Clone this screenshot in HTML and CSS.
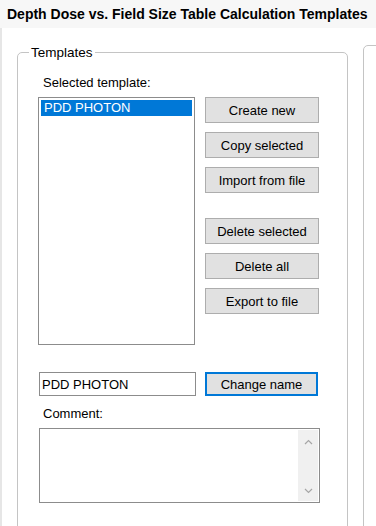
FILE: index.html
```html
<!DOCTYPE html>
<html lang="en">
<head>
  <meta charset="UTF-8" />
  <meta name="viewport" content="width=device-width, initial-scale=1.0" />
  <title>Depth Dose vs. Field Size Table Calculation Templates</title>
  <link rel="stylesheet" href="styles.css">
</head>
<body>
  <div class="title-bar">Depth Dose vs. Field Size Table Calculation Templates</div>
  <div class="main">
    <fieldset class="group templates">
      <legend>Templates</legend>
      <div class="group-body">
        <div class="label">Selected template:</div>
        <div class="pick-row">
          <div class="listbox">
            <div class="item selected">PDD PHOTON</div>
          </div>
          <div class="actions">
            <div class="btn-set">
              <button class="btn">Create new</button>
              <button class="btn">Copy selected</button>
              <button class="btn">Import from file</button>
            </div>
            <div class="btn-set">
              <button class="btn">Delete selected</button>
              <button class="btn">Delete all</button>
              <button class="btn">Export to file</button>
            </div>
          </div>
        </div>
        <div class="name-row">
          <input class="name-input" type="text" value="PDD PHOTON" />
          <button class="btn focused">Change name</button>
        </div>
        <div class="label comment-label">Comment:</div>
        <div class="comment">
          <div class="comment-text"></div>
          <div class="scroll">
            <svg width="9" height="6" viewBox="0 0 9 6"><path d="M1 5 L4.5 1.5 L8 5" fill="none" stroke="#a6a6a6" stroke-width="1.2"/></svg>
            <svg width="9" height="6" viewBox="0 0 9 6"><path d="M1 1 L4.5 4.5 L8 1" fill="none" stroke="#a6a6a6" stroke-width="1.2"/></svg>
          </div>
        </div>
      </div>
    </fieldset>
    <fieldset class="group other"></fieldset>
  </div>
</body>
</html>
```

FILE: styles.css
```css
body {
  margin: 0;
  font-family: "Liberation Sans", Arial, sans-serif;
  font-size: 13px;
  color: #000;
  background-color: #fff;
  overflow: hidden;
}

.title-bar {
  height: 28px;
  line-height: 28px;
  padding-left: 7px;
  background-color: #f7f7f7;
  font-size: 14px;
  font-weight: bold;
  white-space: nowrap;
  overflow: hidden;
}

.main {
  display: flex;
  gap: 15px;
  padding-left: 15px;
  border-left: 2px solid #e6e6e6;
  height: 498px;
  overflow: hidden;
}

.group {
  margin: 17px 0 0;
  padding: 0;
  border: 1px solid #c4c4c4;
  border-radius: 5px;
  box-sizing: border-box;
  height: 520px;
  flex-shrink: 0;
}

.group legend {
  margin-left: 11px;
  padding: 0 2px;
  line-height: 15px;
  font-size: 13.5px;
}

.templates {
  width: 331px;
}

.other {
  width: 100px;
}

.group-body {
  padding: 15px 0 0 20px;
}

.label {
  line-height: 15px;
  padding-left: 5px;
}

.pick-row {
  display: flex;
  gap: 10px;
  margin-top: 7px;
}

.listbox {
  width: 157px;
  height: 248px;
  box-sizing: border-box;
  border: 1px solid #8c8c8c;
  padding: 2px;
}

.item {
  line-height: 16px;
  padding-left: 3px;
}

.item.selected {
  background-color: #0078d7;
  color: #fff;
}

.actions {
  display: flex;
  flex-direction: column;
  gap: 25px;
}

.btn-set {
  display: flex;
  flex-direction: column;
  gap: 9px;
}

.btn {
  width: 114px;
  height: 26px;
  box-sizing: border-box;
  background-color: #e1e1e1;
  border: 1px solid #adadad;
  font-family: inherit;
  font-size: 13px;
  color: #000;
  padding: 0;
}

.name-row {
  display: flex;
  gap: 9px;
  margin-top: 27px;
  margin-left: 1px;
}

.name-input {
  width: 157px;
  height: 24px;
  box-sizing: border-box;
  border: 1px solid #8c8c8c;
  padding: 0 2px;
  margin: 0;
  font-family: inherit;
  font-size: 13px;
  color: #000;
}

.btn.focused {
  width: 113px;
  height: 24px;
  border: 2px solid #0078d7;
}

.comment-label {
  margin-top: 10px;
}

.comment {
  display: flex;
  width: 281px;
  height: 75px;
  box-sizing: border-box;
  margin: 7px 0 0 1px;
  border: 1px solid #8c8c8c;
}

.comment-text {
  flex: 1;
}

.scroll {
  width: 20px;
  margin: 1px;
  background-color: #f0f0f0;
  display: flex;
  flex-direction: column;
  justify-content: space-between;
  align-items: center;
  padding: 9px 0 7px;
}
```
